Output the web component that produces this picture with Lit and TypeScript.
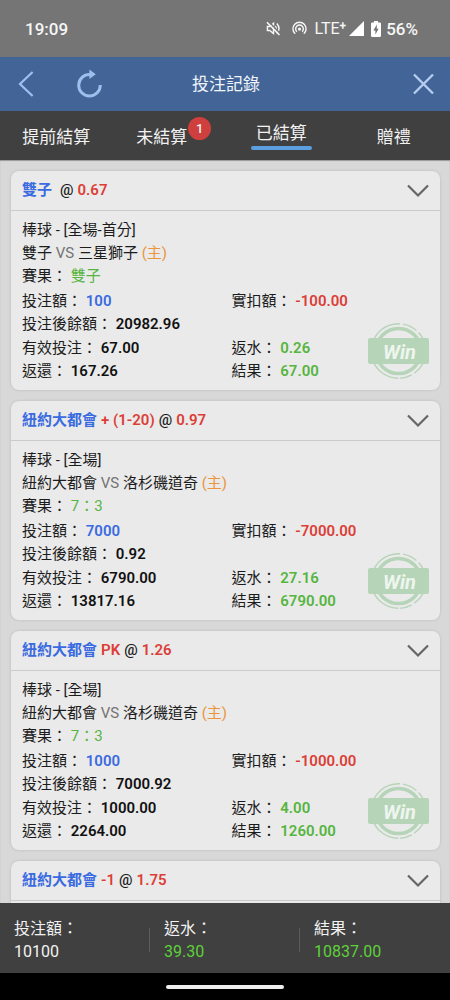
import { LitElement, html, css, nothing } from "lit";
import { customElement, property, state } from "lit/decorators.js";
import { classMap } from "lit/directives/class-map.js";

interface Details {
  market: string;
  home: string;
  away: string;
  score: string;
  stake: string;
  deducted: string;
  balance: string;
  valid: string;
  rebate: string;
  returned: string;
  result: string;
}

interface Bet {
  pick: string;
  handicap: string;
  odds: string;
  details?: Details;
}

const BETS: Bet[] = [
  {
    pick: "雙子", handicap: "", odds: "0.67",
    details: {
      market: "棒球 - [全場-首分]", home: "雙子", away: "三星獅子", score: "雙子",
      stake: "100", deducted: "-100.00", balance: "20982.96", valid: "67.00",
      rebate: "0.26", returned: "167.26", result: "67.00",
    },
  },
  {
    pick: "紐約大都會", handicap: "+ (1-20)", odds: "0.97",
    details: {
      market: "棒球 - [全場]", home: "紐約大都會", away: "洛杉磯道奇", score: "7：3",
      stake: "7000", deducted: "-7000.00", balance: "0.92", valid: "6790.00",
      rebate: "27.16", returned: "13817.16", result: "6790.00",
    },
  },
  {
    pick: "紐約大都會", handicap: "PK", odds: "1.26",
    details: {
      market: "棒球 - [全場]", home: "紐約大都會", away: "洛杉磯道奇", score: "7：3",
      stake: "1000", deducted: "-1000.00", balance: "7000.92", valid: "1000.00",
      rebate: "4.00", returned: "2264.00", result: "1260.00",
    },
  },
  { pick: "紐約大都會", handicap: "-1", odds: "1.75" },
];

@customElement("status-bar")
class StatusBar extends LitElement {
  static styles = css`
    :host {
      display: flex;
      align-items: center;
      justify-content: space-between;
      height: 57px;
      padding: 0 32px 0 25px;
      background: #757575;
      color: #f6f6f6;
      font-size: 17px;
      font-weight: 500;
    }
    .icons { display: flex; align-items: center; }
    .icons svg { display: block; flex: none; }
    .mute { margin-right: 11px; }
    .cast { margin-right: 7px; }
    .net { font-size: 16px; font-weight: 400; }
    .plus { font-size: 12px; font-weight: 600; vertical-align: 4px; line-height: 1; }
    .signal { margin: 0 7px 0 3px; }
    .battery { margin-right: 5px; }
  `;
  render() {
    return html`
      <span>19:09</span>
      <div class="icons">
        <svg class="mute" width="15" height="15" viewBox="0 0 16 16" fill="none" stroke="#f6f6f6" stroke-width="1.5">
          <path d="M1.5 5.8H4L8 2.4V13.4L4 10.2H1.5Z" />
          <path d="M10 5.4Q12 8 10 10.6M11.6 2.6Q16.2 8 11.6 13.4" />
          <path d="M2.8 .6L15.4 13.6" stroke="#757575" stroke-width="1.6" />
          <path d="M1 1.4L14.4 15" stroke-width="1.7" />
        </svg>
        <svg class="cast" width="15" height="15" viewBox="0 0 16 16" fill="none" stroke="#f6f6f6" stroke-width="1.5">
          <path d="M3.4 13.6A7 7 0 1 1 12.6 13.6" />
          <path d="M5.2 11.4A4.1 4.1 0 1 1 10.8 11.4" />
          <circle cx="8" cy="8.6" r="1.7" fill="#f6f6f6" stroke="none" />
        </svg>
        <span class="net">LTE<span class="plus">+</span></span>
        <svg class="signal" width="15" height="15" viewBox="0 0 15 15"><path d="M15 0V15H0Z" fill="#fff" /></svg>
        <svg class="battery" width="10" height="16" viewBox="0 0 10 16">
          <path d="M3 0H7V1.6H8.8Q10 1.6 10 2.8V14.8Q10 16 8.8 16H1.2Q0 16 0 14.8V2.8Q0 1.6 1.2 1.6H3Z" fill="#fff" />
          <path d="M5.8 3.6L2.4 9.4H4.4V13.6L7.6 7.8H5.8Z" fill="#757575" />
        </svg>
        <span>56%</span>
      </div>
    `;
  }
}

@customElement("bet-card")
class BetCard extends LitElement {
  @property({ attribute: false }) bet!: Bet;

  static styles = css`
    :host {
      display: block;
      position: relative;
      flex: none;
      background: #eaeaea;
      border-radius: 8px;
      box-shadow: 0 0 3px rgba(0, 0, 0, 0.14);
      font-size: 15px;
      line-height: 23px;
      color: #1c1c1c;
    }
    .head {
      display: flex;
      align-items: center;
      justify-content: space-between;
      box-sizing: border-box;
      height: 40px;
      padding: 0 11px;
      border-bottom: 1px solid #cbcbcb;
    }
    .title { display: flex; gap: 4px; margin: 0; font-size: 15px; font-weight: 500; }
    .pick { font-weight: 700; }
    .title .red { font-weight: 600; }
    .toggle { display: flex; padding: 0; border: 0; background: none; cursor: pointer; }
    .body { min-height: 20px; padding: 8px 11px 7px; }
    .row { margin: 0; }
    .money { display: grid; grid-template-columns: 1fr 1fr; column-gap: 12px; margin-top: 1px; }
    .wide { grid-column: 1 / -1; margin-bottom: 1px; }
    .info { padding-bottom: 1px; }
    .blue { color: #3a6be0; }
    .red { color: #dc3e37; }
    .green { color: #56b53f; }
    .orange { color: #ea9540; }
    .gray { color: #737373; }
    .num { font-weight: 600; }
    .black { color: #111; }
    .stamp { position: absolute; right: 11px; bottom: 9px; }
    .win { font: italic 700 20px Roboto, sans-serif; }
  `;

  private field(label: string, value: string, color: string, wide = false) {
    return html`<div class=${classMap({ wide })}>${label}： <span class="num ${color}">${value}</span></div>`;
  }

  private body(d: Details) {
    return html`
      <div class="info">
        <p class="row">${d.market}</p>
        <p class="row">${d.home} <span class="gray">VS</span> ${d.away} <span class="orange">(主)</span></p>
        <p class="row">賽果： <span class="green">${d.score}</span></p>
      </div>
      <div class="money">
        ${this.field("投注額", d.stake, "blue")}
        ${this.field("實扣額", d.deducted, "red")}
        ${this.field("投注後餘額", d.balance, "black", true)}
        ${this.field("有效投注", d.valid, "black")}
        ${this.field("返水", d.rebate, "green")}
        ${this.field("返還", d.returned, "black")}
        ${this.field("結果", d.result, "green")}
      </div>
      <svg class="stamp" width="61" height="60" viewBox="0 0 61 60" fill="none" stroke="#b6d4b8">
        <circle cx="30.5" cy="30" r="22.5" stroke-width="3.5" />
        <circle cx="30.5" cy="30" r="27.3" stroke-width="1.4" stroke-dasharray="26 3 12 2 34 3 8 2 40 3 15 3" />
        <rect x="0" y="17" width="61" height="26" rx="2" fill="#b6d4b8" stroke="none" />
        <text class="win" x="15" y="38" fill="#eef5ee" stroke="none">Win</text>
      </svg>
    `;
  }

  render() {
    const b = this.bet;
    return html`
      <div class="head">
        <h2 class="title">
          <span class="pick blue">${b.pick}</span>
          <span class="red">${b.handicap}</span>
          <span>@</span>
          <span class="red">${b.odds}</span>
        </h2>
        <button class="toggle" aria-label="展開">
          <svg width="22" height="14" viewBox="0 0 22 14" fill="none" stroke="#666" stroke-width="2.2">
            <path d="M1 1.5L11 11.5L21 1.5" />
          </svg>
        </button>
      </div>
      <div class="body">${b.details ? this.body(b.details) : nothing}</div>
    `;
  }
}

@customElement("app-root")
class AppRoot extends LitElement {
  @state() private tab = 2;

  static styles = css`
    :host {
      display: flex;
      flex-direction: column;
      height: 100vh;
      background: #d8d8d8;
      font-family: Roboto, "Noto Sans CJK TC", sans-serif;
    }
    button { border: 0; padding: 0; background: none; color: inherit; font: inherit; cursor: pointer; }
    .bar, .tabs, .totals, .nav { flex: none; }
    .bar {
      display: grid;
      grid-template-columns: 1fr auto 1fr;
      align-items: center;
      height: 54px;
      padding: 0 16px 0 18px;
      background: #426496;
      color: #f0f4fa;
    }
    .heading { margin: 0; padding-bottom: 3px; font-size: 17px; font-weight: 400; }
    .left { display: flex; align-items: center; gap: 42px; }
    .bar button { display: flex; }
    .close { justify-self: end; }
    .tabs {
      display: grid;
      grid-template-columns: repeat(4, 1fr);
      height: 49px;
      background: #404040;
      color: #f2f2f2;
      font-size: 17px;
      line-height: 24px;
    }
    .tab { display: flex; align-items: center; justify-content: center; padding-top: 2px; }
    .label { position: relative; }
    .label.marked { margin-right: 14px; }
    .active .label { padding: 0 5px; }
    .active .label::after {
      content: "";
      display: block;
      height: 4px;
      margin: 1px -5px 0;
      border-radius: 2px;
      background: #5b9fe0;
    }
    .active { padding-top: 0; }
    .badge {
      position: absolute;
      left: 100%;
      top: -8px;
      width: 23px;
      height: 23px;
      margin-left: 1px;
      border-radius: 50%;
      background: #cf3f3d;
      font-size: 13px;
      font-weight: 500;
      line-height: 23px;
      text-align: center;
    }
    .list {
      display: flex;
      flex: 1;
      flex-direction: column;
      gap: 11px;
      min-height: 0;
      padding: 11px 10px 0 11px;
      overflow-y: auto;
      scrollbar-width: none;
      box-shadow: inset 0 1px 1px rgba(0, 0, 0, 0.3);
    }
    .totals {
      display: grid;
      grid-template-columns: repeat(3, 1fr);
      align-items: center;
      box-sizing: border-box;
      height: 70px;
      padding-top: 4px;
      background: #404040;
      color: #f2f2f2;
      font-size: 16px;
      line-height: 23px;
    }
    .total { display: flex; align-items: center; }
    .total dl { margin: 0 0 0 14px; }
    .total dd { margin: 0; }
    .total::after { content: ""; width: 1px; height: 24px; margin-left: auto; background: #5c5c5c; }
    .total:last-child::after { display: none; }
    .gain { color: #5fd03a; }
    .nav { display: flex; align-items: center; justify-content: center; height: 27px; background: #000; }
    .pill { width: 118px; height: 4px; border-radius: 2px; background: #eee; }
  `;

  private tabs = [
    { name: "提前結算", count: 0 },
    { name: "未結算", count: 1 },
    { name: "已結算", count: 0 },
    { name: "贈禮", count: 0 },
  ];

  private total(label: string, value: string, gain: boolean) {
    return html`<div class="total">
      <dl><dt>${label}：</dt><dd class=${classMap({ gain })}>${value}</dd></dl>
    </div>`;
  }

  render() {
    return html`
      <status-bar></status-bar>
      <header class="bar">
        <div class="left">
          <button aria-label="返回">
            <svg width="16" height="26" viewBox="0 0 16 26" fill="none" stroke="#9dc1f0" stroke-width="2.2">
              <path d="M14.6 1L2 13L14.6 25" />
            </svg>
          </button>
          <button aria-label="重新整理">
            <svg width="28" height="30" viewBox="0 0 28 30" fill="none" stroke="#9dbfee" stroke-width="3">
              <path d="M14 5.4A10.8 10.8 0 1 0 24.3 16" />
              <path d="M13.4 .4L19.8 5.2L13.4 10Z" fill="#9dbfee" stroke="none" />
            </svg>
          </button>
        </div>
        <h1 class="heading">投注記錄</h1>
        <button class="close" aria-label="關閉">
          <svg width="21" height="22" viewBox="0 0 21 22" fill="none" stroke="#b5cdee" stroke-width="2.4">
            <path d="M1 1.5L20 20.5M20 1.5L1 20.5" />
          </svg>
        </button>
      </header>
      <nav class="tabs">
        ${this.tabs.map(
          (t, i) => html`<button class=${classMap({ tab: true, active: i === this.tab })} @click=${() => (this.tab = i)}>
            <span class=${classMap({ label: true, marked: t.count > 0 })}
              >${t.name}${t.count ? html`<span class="badge">${t.count}</span>` : nothing}</span
            >
          </button>`,
        )}
      </nav>
      <main class="list">${BETS.map((b) => html`<bet-card .bet=${b}></bet-card>`)}</main>
      <footer class="totals">
        ${this.total("投注額", "10100", false)}
        ${this.total("返水", "39.30", true)}
        ${this.total("結果", "10837.00", true)}
      </footer>
      <div class="nav"><div class="pill"></div></div>
    `;
  }
}
